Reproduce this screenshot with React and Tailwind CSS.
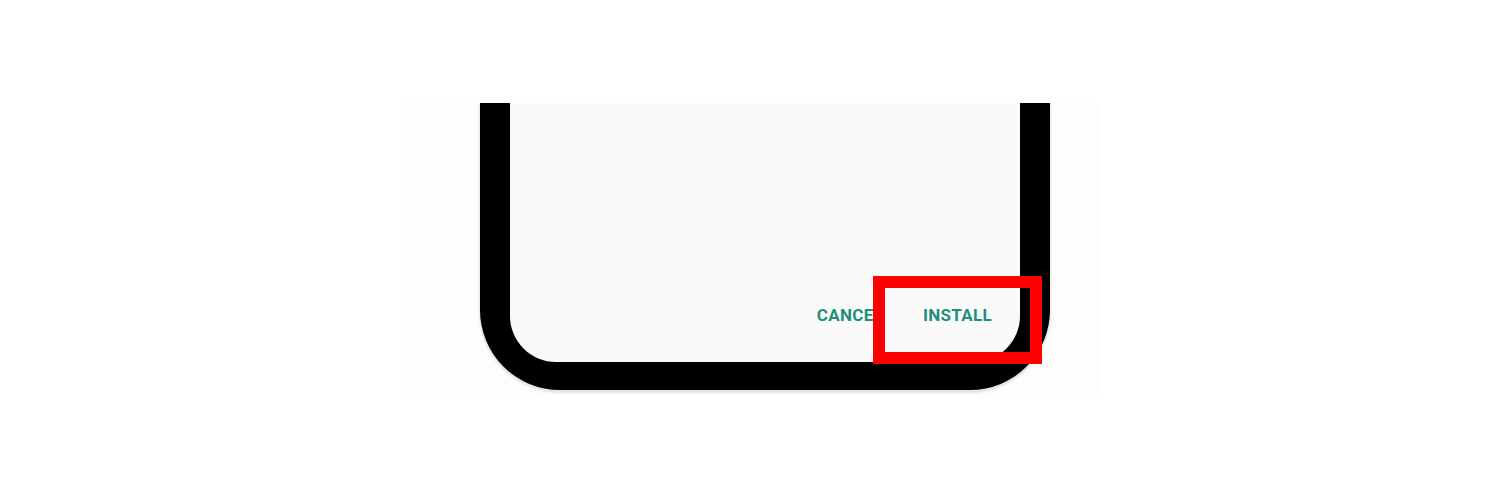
import React from "react";

const App = () => {
  return (
    <div className="w-[1500px] h-[500px] bg-white pt-[103px] font-['Roboto',sans-serif]">
      {/* faint backdrop */}
      <div className="ml-[400px] w-[700px] h-[292px] bg-[#fdfdfd] pl-[80px] overflow-hidden">
        {/* phone frame, top cropped */}
        <div className="relative w-[570px] h-[287px] bg-black rounded-b-[80px] px-[30px] pb-[28px] shadow-[0_2px_2px_1px_#e4e4e4]">
          <div className="h-full bg-[#fafafa] rounded-b-[46px] flex flex-col justify-end">
            <div className="flex items-center justify-end gap-[40px] pr-[28px] pb-[37px]">
              <button className="text-[17px] leading-[20px] font-bold tracking-[0.3px] text-[#1d8f7b]">
                CANCEL
              </button>
              <button className="text-[17px] leading-[20px] font-bold tracking-[0.3px] text-[#1d8f7b]">
                INSTALL
              </button>
            </div>
          </div>

          {/* highlight box */}
          <div className="absolute left-[393px] top-[173px] w-[169px] h-[88px] border-[12px] border-[#ff0000]" />
        </div>
      </div>
    </div>
  );
};

export default App;
